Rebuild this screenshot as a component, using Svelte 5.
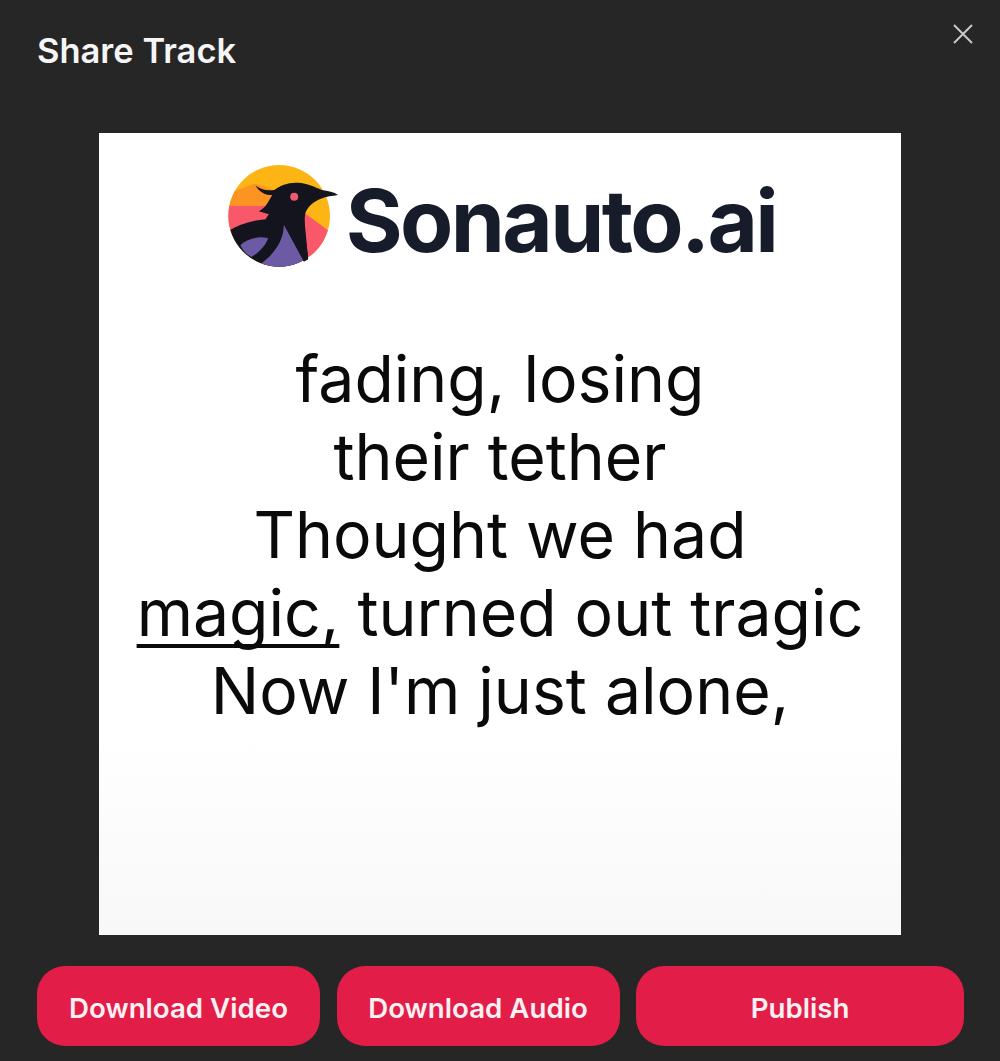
<script>
  const lines = [
    [{ text: "fading, losing" }],
    [{ text: "their tether" }],
    [{ text: "Thought we had" }],
    [{ text: "magic,", active: true }, { text: " turned out tragic" }],
    [{ text: "Now I'm just alone," }],
  ];
  const actions = ["Download Video", "Download Audio", "Publish"];
</script>

<div class="modal">
  <header class="head">
    <h2>Share Track</h2>
    <button class="close" aria-label="Close">
      <svg viewBox="0 0 20 20" width="20" height="20"><path d="M1 1 19 19M19 1 1 19" /></svg>
    </button>
  </header>

  <div class="preview">
    <div class="brand">
      <svg class="logo" viewBox="55 43 335 305" aria-hidden="true">
        <defs>
          <clipPath id="disc"><circle cx="211" cy="195" r="152" /></clipPath>
        </defs>
        <g clip-path="url(#disc)">
          <rect x="50" y="40" width="340" height="310" fill="#fdb515" />
          <path d="M50 130 L140 98 L200 120 L200 165 L50 165 Z" fill="#fb9420" />
          <path d="M50 165 L200 165 L200 240 L50 250 Z" fill="#f9586a" />
          <path d="M285 185 L370 248 L370 350 L285 350 Z" fill="#f9586a" />
          <path d="M50 246 C85 222 130 208 170 205 L285 190 L300 350 L50 350 Z" fill="#14141f" />
          <path d="M225 222 C262 240 285 270 288 326 L288 350 L150 350 L160 335 C195 310 225 270 225 222 Z" fill="#6d5aa5" />
          <path d="M95 282 C120 262 150 255 178 262 C170 285 150 305 128 318 C112 310 100 296 95 282 Z" fill="#6d5aa5" />
        </g>
        <path d="M140 104 C155 116 175 122 198 117 C215 103 240 94 268 96 C295 98 318 108 338 118 C358 120 375 124 387 133 C370 136 352 137 336 144 C315 152 298 166 290 185 C282 215 292 270 298 325 L285 332 L225 222 L170 205 L180 190 L150 181 C168 174 178 155 190 133 C170 134 150 122 140 104 Z" fill="#14141f" />
        <circle cx="256" cy="138" r="12" fill="#ee5a72" />
      </svg>
      <span class="wordmark">Sonauto.ai</span>
    </div>

    <div class="lyrics">
      {#each lines as line}
        <div>
          {#each line as part}
            {#if part.active}<span class="active">{part.text}</span>{:else}{part.text}{/if}
          {/each}
        </div>
      {/each}
    </div>
  </div>

  <div class="actions">
    {#each actions as label}
      <button class="action">{label}</button>
    {/each}
  </div>
</div>

<style>
  :global(body) {
    margin: 0;
    background: #262626;
  }

  .modal {
    box-sizing: border-box;
    width: 1000px;
    height: 1061px;
    padding: 28px 36px 15px 37px;
    background: #262626;
    font-family: Inter, "Liberation Sans", sans-serif;
    display: flex;
    flex-direction: column;
  }

  .head {
    display: flex;
    justify-content: space-between;
    align-items: flex-start;
    height: 105px;
  }

  h2 {
    margin: 0;
    font-size: 34.5px;
    line-height: 46px;
    font-weight: 600;
    color: #f5f5f5;
  }

  .close {
    background: none;
    border: 0;
    padding: 0;
    margin: -4px -9px 0 0;
    width: 20px;
    height: 20px;
    display: block;
  }

  .close svg {
    display: block;
  }

  .close path {
    stroke: #c9c9c9;
    stroke-width: 2;
    fill: none;
  }

  .preview {
    align-self: flex-start;
    margin-left: 62px;
    width: 802px;
    height: 802px;
    flex: none;
    background: linear-gradient(to bottom, #fff 75%, #f8f8f8 100%);
    display: flex;
    flex-direction: column;
    align-items: center;
    padding-top: 32px;
    box-sizing: border-box;
  }

  .brand {
    display: flex;
    align-items: center;
    gap: 7px;
    height: 101px;
    margin-left: 3px;
    color: #171c2b;
  }

  .logo {
    width: 112px;
    height: 102px;
    display: block;
  }

  .wordmark {
    font-size: 87px;
    font-weight: 650;
    letter-spacing: -2.6px;
    line-height: 101px;
    padding-top: 10px;
  }

  .lyrics {
    margin-top: 74px;
    font-size: 64.3px;
    line-height: 78px;
    color: #0a0a0a;
    text-align: center;
    white-space: pre;
  }

  .active {
    text-decoration: underline;
    text-decoration-thickness: 4px;
    text-underline-offset: 8px;
    text-decoration-skip-ink: none;
  }

  .actions {
    display: flex;
    gap: 16.5px;
    margin-top: 31px;
  }

  .action {
    height: 80px;
    width: 283px;
    flex: none;
    border: 0;
    border-radius: 28px;
    background: #e11d48;
    color: #fdeff2;
    font: 600 27.7px Inter, "Liberation Sans", sans-serif;
    padding: 3px 0 0;
  }

  .action:last-child {
    flex: 1;
  }
</style>
